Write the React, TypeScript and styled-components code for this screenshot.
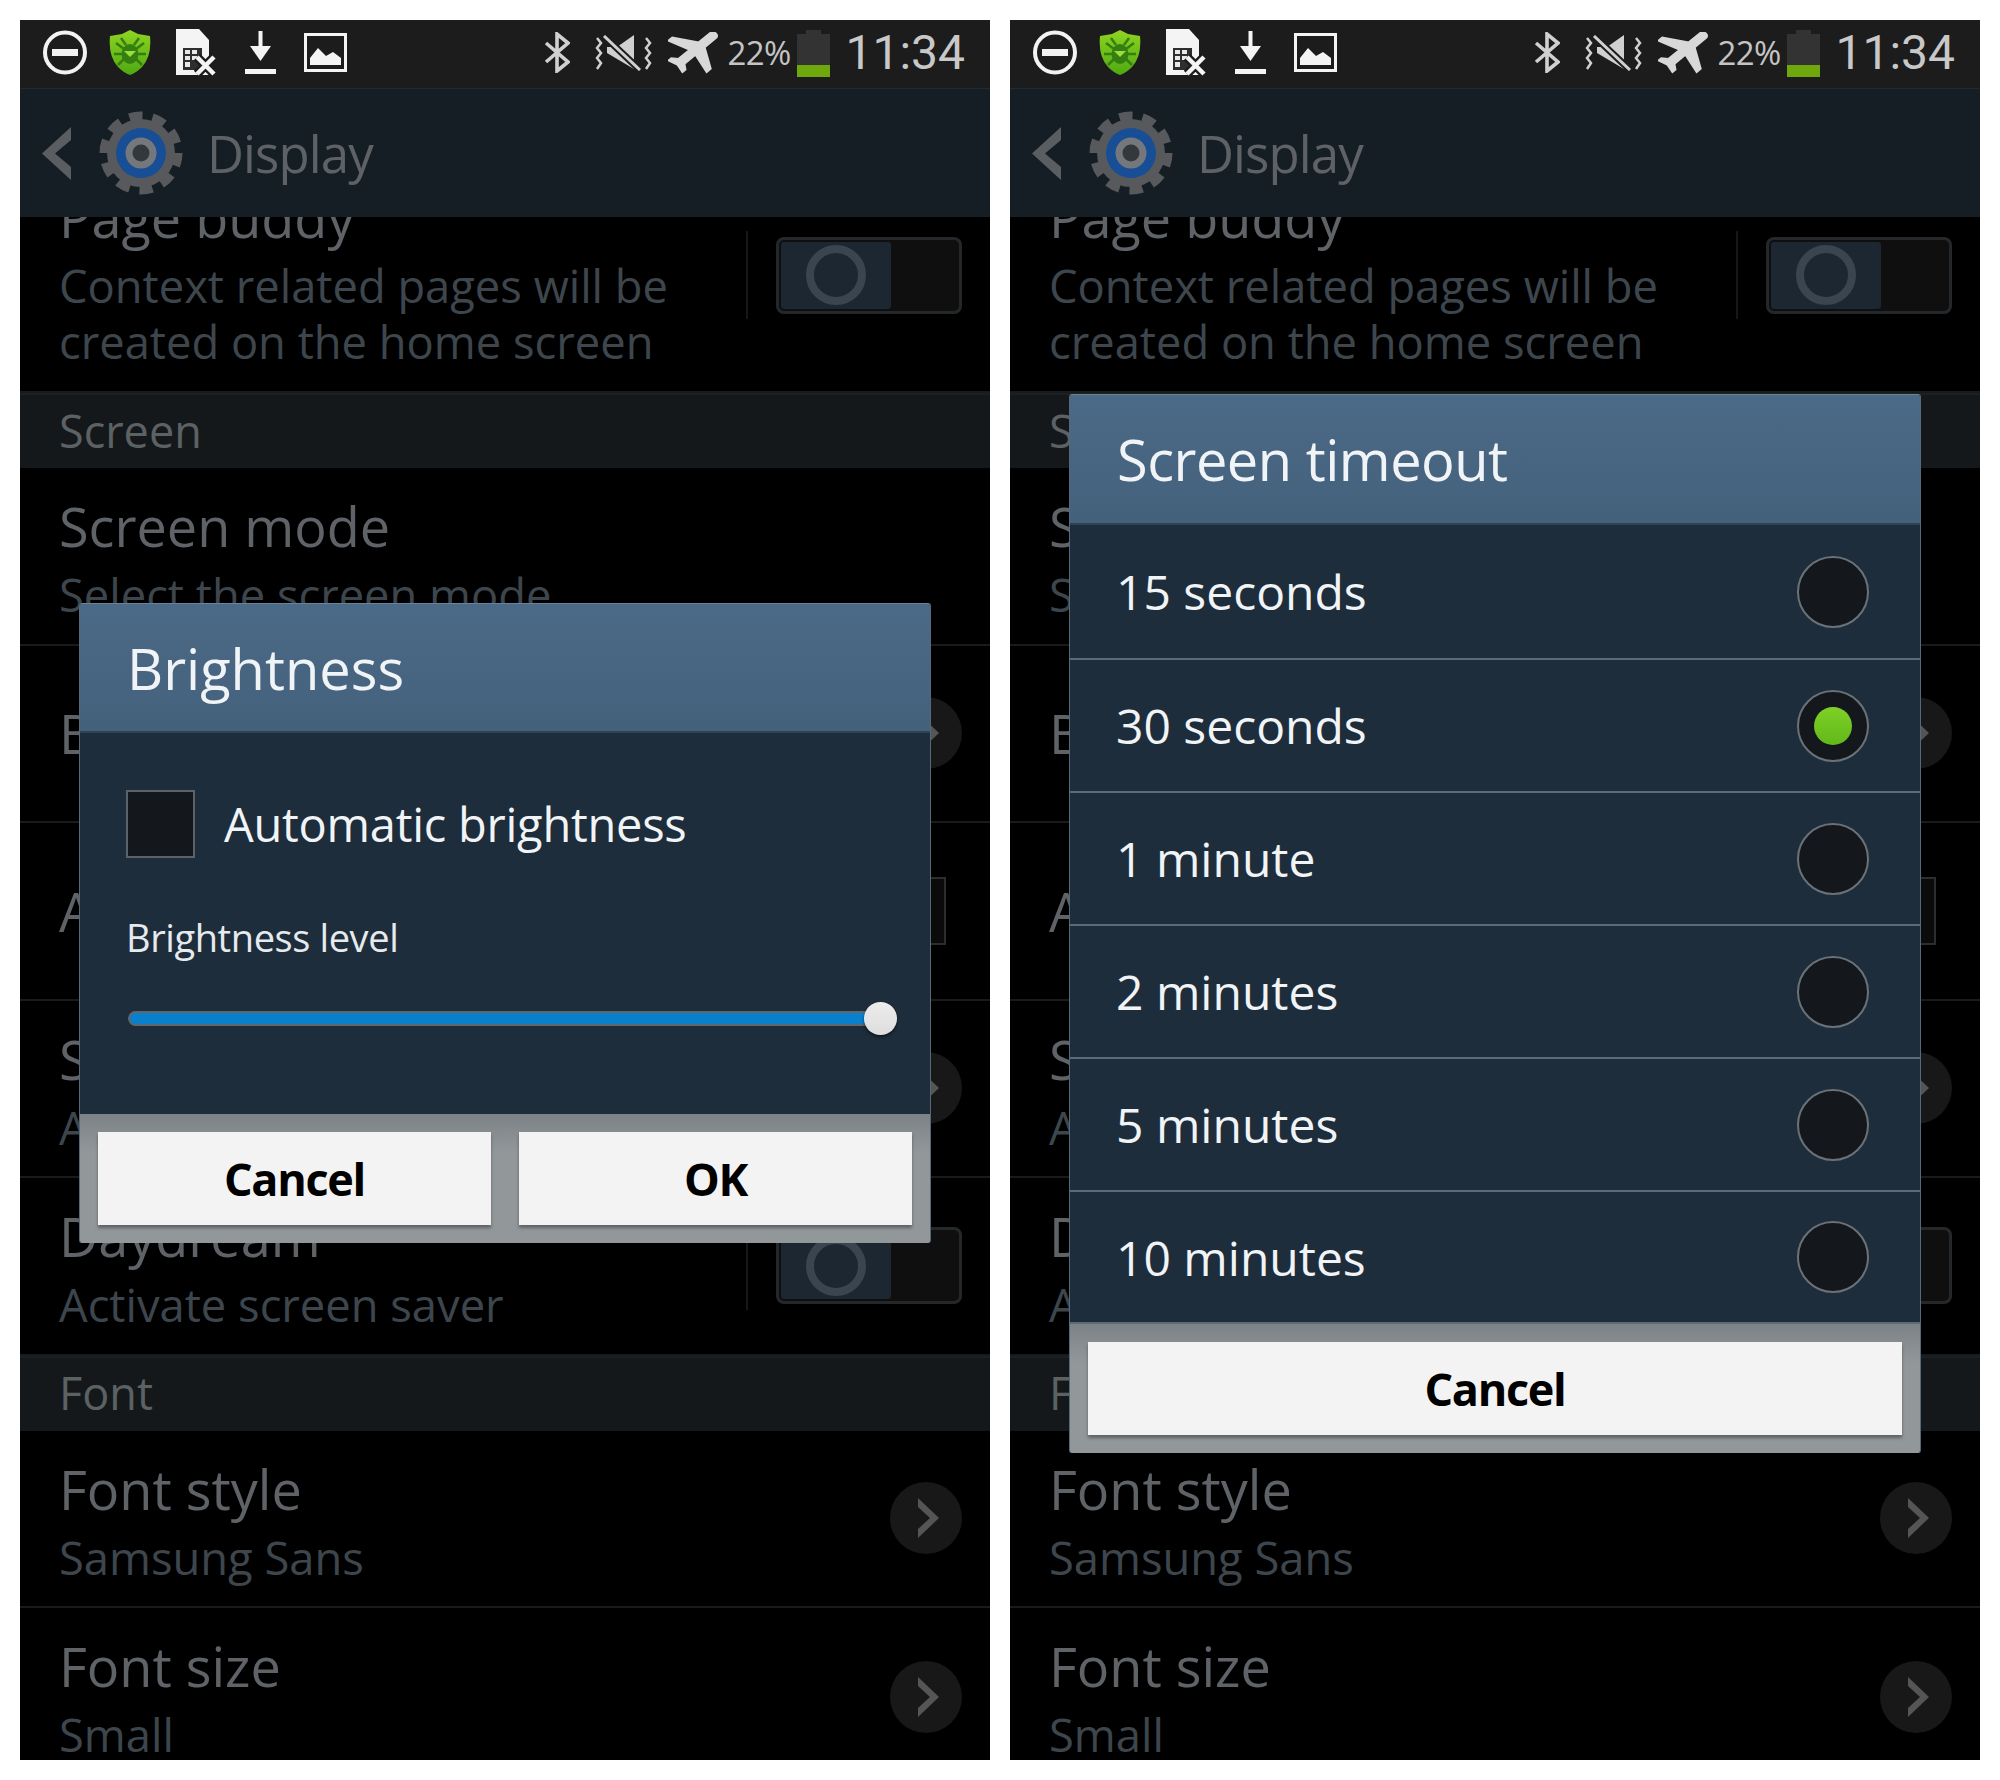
import React from 'react';
import styled, { createGlobalStyle } from 'styled-components';

const GlobalStyle = createGlobalStyle`
  html, body {
    margin: 0;
    padding: 0;
    background: #fff;
    font-family: "Open Sans", "Noto Sans", sans-serif;
  }
  * { box-sizing: border-box; }
`;

const Page = styled.div`
  width: 2000px;
  height: 1780px;
  padding: 20px;
  display: flex;
  gap: 20px;
`;

const Phone = styled.div`
  position: relative;
  width: 970px;
  height: 1740px;
  background: #000;
  display: flex;
  flex-direction: column;
  overflow: hidden;
`;

const StatusBar = styled.div`
  flex: none;
  height: 68px;
  background: #1c1c1c;
  display: flex;
  align-items: center;
  padding: 0 25px 3px 23px;
`;

const StatusIcon = styled.svg<{ $gap?: number }>`
  flex: none;
  display: block;
  margin-left: ${p => p.$gap ?? 0}px;
`;

const StatusRight = styled.div`
  margin-left: auto;
  display: flex;
  align-items: center;
`;

const Percent = styled.span`
  font-size: 33px;
  color: #c4c4c4;
  margin-left: 10px;
  letter-spacing: -0.7px;
`;

const Battery = styled.div`
  position: relative;
  width: 33px;
  height: 43px;
  margin: 6px 0 0 7px;
  background: linear-gradient(#333 0 31px, #6fa80c 31px);
  &::before {
    content: "";
    position: absolute;
    left: 9px;
    top: -4px;
    width: 15px;
    height: 4px;
    background: #333;
  }
`;

const Clock = styled.span`
  font-family: Roboto, "Open Sans", sans-serif;
  font-size: 48px;
  color: #c8c8c8;
  margin-left: 15px;
`;

const NavBar = styled.div`
  flex: none;
  height: 129px;
  background: #161e25;
  border-top: 1px solid #1f2a33;
  display: flex;
  align-items: center;
  padding-left: 22px;
  position: relative;
  z-index: 1;
`;

const NavTitle = styled.span`
  font-size: 51px;
  color: #5e6266;
  margin-left: 24px;
  letter-spacing: -0.9px;
`;

const List = styled.div`
  flex: 1;
  min-height: 0;
  overflow: hidden;
`;

const Row = styled.div<{ $height?: number; $offset?: number }>`
  height: ${p => p.$height ?? 177.5}px;
  margin-top: ${p => p.$offset ?? 0}px;
  border-bottom: 2px solid #1a1a1a;
  display: flex;
  align-items: center;
  justify-content: space-between;
  padding: 0 28px 0 39px;
`;

const LastRow = styled(Row)`
  border-bottom: none;
`;

const RowText = styled.div<{ $single?: boolean }>`
  align-self: ${p => (p.$single ? 'center' : 'flex-start')};
  padding-top: ${p => (p.$single ? 0 : 25)}px;
`;

const RowTitle = styled.div`
  font-size: 54px;
  line-height: 66px;
  color: #5f6367;
  white-space: nowrap;
`;

const RowSub = styled.div`
  font-size: 45.3px;
  line-height: 56px;
  margin-top: 8px;
  color: #3e464d;
  white-space: nowrap;
`;

const SectionHeader = styled.div`
  height: 75px;
  background: #14181b;
  border-top: 2px solid #1a2024;
  display: flex;
  align-items: center;
  padding: 0 0 3px 39px;
  font-size: 45px;
  color: #5c6164;
`;

const ArrowButton = styled.div`
  flex: none;
  width: 72px;
  height: 72px;
  border-radius: 50%;
  background: #181818;
  display: flex;
  align-items: center;
  justify-content: center;
  padding-left: 4px;
`;

const ToggleWrap = styled.div`
  flex: none;
  display: flex;
  align-items: center;
  gap: 28px;
`;

const ToggleDivider = styled.div`
  width: 2px;
  height: 88px;
  background: #14181c;
`;

const Toggle = styled.div`
  width: 186px;
  height: 77px;
  background: #0f0f0f;
  border: 3px solid #24282b;
  border-radius: 8px;
  padding: 2px;
  display: flex;
`;

const ToggleKnob = styled.div`
  width: 110px;
  background: #1d2731;
  border-radius: 3px;
  display: flex;
  align-items: center;
  justify-content: center;
  &::after {
    content: "";
    width: 44px;
    height: 44px;
    border-radius: 50%;
    border: 8px solid #3a4550;
  }
`;

const RowCheck = styled.div`
  flex: none;
  width: 69px;
  height: 68px;
  margin-right: 16px;
  background: #0b0b0b;
  border: 2px solid #2b2d2f;
`;

const Dialog = styled.div<{ $top: number }>`
  position: absolute;
  z-index: 2;
  left: 59px;
  top: ${p => p.$top}px;
  width: 852px;
  border-radius: 3px;
  overflow: hidden;
  background: #1e2d3b;
  border-left: 1px solid #56697a;
  border-right: 1px solid #56697a;
`;

const DialogHeader = styled.div`
  height: 130px;
  background: linear-gradient(#4b6a87, #44617c);
  border-top: 1px solid #6b8298;
  border-bottom: 2px solid #2c4257;
  display: flex;
  align-items: center;
  padding-left: 47px;
  font-size: 56px;
  color: #f1f4f6;
`;

const TimeoutHeader = styled(DialogHeader)`
  height: 131px;
  letter-spacing: -0.5px;
`;

const BrightnessBody = styled.div`
  height: 381px;
  padding: 57px 40px 0 46px;
`;

const CheckRow = styled.div`
  display: flex;
  align-items: center;
  gap: 29px;
`;

const CheckBox = styled.div`
  width: 69px;
  height: 68px;
  background: #14171b;
  border: 2px solid #5b6268;
`;

const CheckLabel = styled.span`
  font-size: 47px;
  color: #f1f4f6;
  letter-spacing: -0.25px;
`;

const LevelLabel = styled.div`
  font-size: 38px;
  line-height: 50px;
  margin-top: 54px;
  color: #e6eaed;
  letter-spacing: -0.4px;
`;

const SliderTrack = styled.div`
  position: relative;
  height: 15px;
  width: 760px;
  margin: 49px 0 0 2px;
  background: #0a7fcb;
  border: 2px solid #5f666c;
  border-radius: 8px;
`;

const SliderThumb = styled.div`
  position: absolute;
  right: -11px;
  top: -11px;
  width: 33px;
  height: 33px;
  border-radius: 50%;
  background: linear-gradient(#ececec, #dedede);
  box-shadow: 0 2px 3px rgba(0, 0, 0, 0.5);
`;

const DialogFooter = styled.div`
  height: 129px;
  padding: 18px 18px;
  background: linear-gradient(#7c8285, #92979a 30%);
  display: flex;
  gap: 28px;
`;

const DialogButton = styled.div`
  flex: 1;
  height: 93px;
  background: #f3f3f3;
  box-shadow: 0 3px 3px rgba(0, 0, 0, 0.35);
  display: flex;
  align-items: center;
  justify-content: center;
  font-size: 45px;
  font-weight: 700;
  letter-spacing: -1.3px;
  color: #000;
`;

const OptionRow = styled.div<{ $height: number }>`
  height: ${p => p.$height}px;
  border-bottom: 2px solid #5a6b7a;
  display: flex;
  align-items: center;
  justify-content: space-between;
  padding: 0 51px 0 46px;
  font-size: 48px;
  color: #f1f4f6;
  &:last-of-type {
    border-bottom: none;
  }
`;

const Radio = styled.div<{ $on?: boolean }>`
  width: 72px;
  height: 72px;
  border-radius: 50%;
  background: #14171b;
  border: 2px solid #6a7278;
  display: flex;
  align-items: center;
  justify-content: center;
  &::after {
    content: "";
    display: ${p => (p.$on ? 'block' : 'none')};
    width: 38px;
    height: 38px;
    border-radius: 50%;
    background: linear-gradient(#7fd126, #62b81a);
  }
`;

const GearWrap = styled.svg`
  flex: none;
  margin-left: 28px;
`;

const MinusCircle = () => (
  <StatusIcon width="44" height="45" viewBox="0 0 44 45">
    <circle cx="22" cy="22.5" r="20" fill="none" stroke="#f2f2f2" strokeWidth="4" />
    <rect x="9" y="19" width="26" height="7" fill="#f2f2f2" />
  </StatusIcon>
);

const ShieldIcon = () => (
  <StatusIcon $gap={22} width="42" height="45" viewBox="0 0 42 45">
    <defs>
      <linearGradient id="shieldFill" x1="0" y1="0" x2="0" y2="1">
        <stop offset="0" stopColor="#8fd422" />
        <stop offset="1" stopColor="#4fa812" />
      </linearGradient>
    </defs>
    <path d="M21 0 L29 4 L41 6 Q43 26 33 37 Q27 43 21 45 Q15 43 9 37 Q-1 26 1 6 L13 4 Z" fill="url(#shieldFill)" />
    <ellipse cx="21" cy="24" rx="8.5" ry="10" fill="#357f10" />
    <path d="M7 13 L15 19 M35 13 L27 19 M5 24 L13 24 M37 24 L29 24 M9 35 L15 29 M33 35 L27 29 M12 8 L17 15 M30 8 L25 15" stroke="#357f10" strokeWidth="2.5" />
    <path d="M15 21 L27 21 L21 27 Z" fill="#9ddc3f" />
  </StatusIcon>
);

const SimIcon = () => (
  <StatusIcon $gap={25} width="40" height="47" viewBox="0 0 40 47">
    <path d="M0 0 H23 L33 11 V46 H0 Z" fill="#f4f4f4" />
    <rect x="7" y="19" width="19" height="22" fill="#2e2e2e" />
    <path d="M9 21 h5 v4 h-5 z M16 21 h5 v4 h-5 z M9 27 h5 v4 h-5 z M16 27 h5 v4 h-5 z M9 33 h5 v5 h-5 z" fill="#e8e8e8" />
    <path d="M21 28 L38 45 M38 28 L21 45" stroke="#1c1c1c" strokeWidth="9" />
    <path d="M21 28 L38 45 M38 28 L21 45" stroke="#f4f4f4" strokeWidth="4.5" />
  </StatusIcon>
);

const DownloadIcon = () => (
  <StatusIcon $gap={29} width="31" height="43" viewBox="0 0 31 43">
    <rect x="13.5" y="0" width="4" height="16" fill="#f4f4f4" />
    <path d="M5 15 H26 L15.5 30 Z" fill="#f4f4f4" />
    <rect x="0" y="38" width="31" height="5" fill="#f4f4f4" />
  </StatusIcon>
);

const PictureIcon = () => (
  <StatusIcon $gap={28} width="43" height="39" viewBox="0 0 43 39">
    <rect x="1.5" y="1.5" width="40" height="36" fill="none" stroke="#f4f4f4" strokeWidth="3" />
    <path d="M6 32 V25 L14 15 L22 23 L29 19 L37 25 V32 Z" fill="#f4f4f4" />
  </StatusIcon>
);

const BluetoothIcon = () => (
  <StatusIcon width="26" height="41" viewBox="0 0 26 41">
    <path d="M2 11 L24 30 L13 39 V2 L24 11 L2 30" fill="none" stroke="#d0d0d0" strokeWidth="3.6" />
  </StatusIcon>
);

const MuteIcon = () => (
  <StatusIcon $gap={25} width="57" height="36" viewBox="0 0 57 36">
    <path d="M12 12 H22 L39 0 V34 L12 18 Z" fill="#d0d0d0" />
    <path d="M9 1 L45 35" stroke="#1c1c1c" strokeWidth="7" />
    <path d="M9 1 L45 35" stroke="#d0d0d0" strokeWidth="3" />
    <path d="M2 3 L6 8 L2 13 L6 18 L2 23 L6 28 L2 34" fill="none" stroke="#d0d0d0" strokeWidth="2.5" />
    <path d="M51 3 L55 8 L51 13 L55 18 L51 23 L55 28 L51 34" fill="none" stroke="#d0d0d0" strokeWidth="2.5" />
  </StatusIcon>
);

const AirplaneIcon = () => (
  <StatusIcon $gap={16} width="50" height="42" viewBox="2 4 17.5 18" preserveAspectRatio="none">
    <path
      transform="rotate(45 12 12)"
      fill="#d8d8d8"
      stroke="#d8d8d8"
      strokeWidth="0.7"
      d="M21 16v-2l-8-5V3.5c0-.83-.67-1.5-1.5-1.5S10 2.67 10 3.5V9l-8 5v2l8-2.5V19l-2 1.5V22l3.5-1 3.5 1v-1.5L13 19v-5.5l8 2.5z"
    />
  </StatusIcon>
);

const BackChevron = () => (
  <svg width="29" height="53" viewBox="0 0 29 53">
    <path d="M29 0 V13 L13 26.5 L29 40 V53 L0 26.5 Z" fill="#5a5e62" />
  </svg>
);

const GearIcon = () => (
  <GearWrap width="84" height="84" viewBox="0 0 84 84">
    <circle cx="42" cy="42" r="34" fill="#58595c" />
    <circle cx="42" cy="42" r="37" fill="none" stroke="#58595c" strokeWidth="9" strokeDasharray="13.2 10" />
    <circle cx="42" cy="42" r="25" fill="#174e96" />
    <circle cx="42" cy="42" r="12" fill="#33383d" stroke="#74787c" strokeWidth="7" />
  </GearWrap>
);

const ChevronRight = () => (
  <svg width="21" height="40" viewBox="0 0 21 40">
    <path d="M0 0 L21 20 L0 40 L0 31 L12 20 L0 9 Z" fill="#555" />
  </svg>
);

const PhoneToggle = () => (
  <ToggleWrap>
    <ToggleDivider />
    <Toggle>
      <ToggleKnob />
    </Toggle>
  </ToggleWrap>
);

const Arrow = () => (
  <ArrowButton>
    <ChevronRight />
  </ArrowButton>
);

const SettingsScreen = () => (
  <>
    <StatusBar>
      <MinusCircle />
      <ShieldIcon />
      <SimIcon />
      <DownloadIcon />
      <PictureIcon />
      <StatusRight>
        <BluetoothIcon />
        <MuteIcon />
        <AirplaneIcon />
        <Percent>22%</Percent>
        <Battery />
        <Clock>11:34</Clock>
      </StatusRight>
    </StatusBar>
    <NavBar>
      <BackChevron />
      <GearIcon />
      <NavTitle>Display</NavTitle>
    </NavBar>
    <List>
      <Row $height={234} $offset={-58}>
        <RowText>
          <RowTitle>Page buddy</RowTitle>
          <RowSub>
            Context related pages will be
            <br />
            created on the home screen
          </RowSub>
        </RowText>
        <PhoneToggle />
      </Row>
      <SectionHeader>Screen</SectionHeader>
      <Row>
        <RowText>
          <RowTitle>Screen mode</RowTitle>
          <RowSub>Select the screen mode</RowSub>
        </RowText>
      </Row>
      <Row>
        <RowText $single>
          <RowTitle>Brightness</RowTitle>
        </RowText>
        <Arrow />
      </Row>
      <Row>
        <RowText $single>
          <RowTitle>Auto-rotate screen</RowTitle>
        </RowText>
        <RowCheck />
      </Row>
      <Row>
        <RowText>
          <RowTitle>Screen timeout</RowTitle>
          <RowSub>After 30 seconds of inactivity</RowSub>
        </RowText>
        <Arrow />
      </Row>
      <Row>
        <RowText>
          <RowTitle>Daydream</RowTitle>
          <RowSub>Activate screen saver</RowSub>
        </RowText>
        <PhoneToggle />
      </Row>
      <SectionHeader>Font</SectionHeader>
      <Row>
        <RowText>
          <RowTitle>Font style</RowTitle>
          <RowSub>Samsung Sans</RowSub>
        </RowText>
        <Arrow />
      </Row>
      <LastRow>
        <RowText>
          <RowTitle>Font size</RowTitle>
          <RowSub>Small</RowSub>
        </RowText>
        <Arrow />
      </LastRow>
    </List>
  </>
);

const timeoutOptions = ['15 seconds', '30 seconds', '1 minute', '2 minutes', '5 minutes', '10 minutes'];

const optionHeight = (index: number) => {
  if (index === 0) return 135;
  return index === timeoutOptions.length - 1 ? 132 : 133;
};

export default function App() {
  return (
    <Page>
      <GlobalStyle />
      <Phone>
        <SettingsScreen />
        <Dialog $top={583}>
          <DialogHeader>Brightness</DialogHeader>
          <BrightnessBody>
            <CheckRow>
              <CheckBox />
              <CheckLabel>Automatic brightness</CheckLabel>
            </CheckRow>
            <LevelLabel>Brightness level</LevelLabel>
            <SliderTrack>
              <SliderThumb />
            </SliderTrack>
          </BrightnessBody>
          <DialogFooter>
            <DialogButton>Cancel</DialogButton>
            <DialogButton>OK</DialogButton>
          </DialogFooter>
        </Dialog>
      </Phone>
      <Phone>
        <SettingsScreen />
        <Dialog $top={374}>
          <TimeoutHeader>Screen timeout</TimeoutHeader>
          {timeoutOptions.map((option, i) => (
            <OptionRow key={option} $height={optionHeight(i)}>
              {option}
              <Radio $on={option === '30 seconds'} />
            </OptionRow>
          ))}
          <DialogFooter>
            <DialogButton>Cancel</DialogButton>
          </DialogFooter>
        </Dialog>
      </Phone>
    </Page>
  );
}
